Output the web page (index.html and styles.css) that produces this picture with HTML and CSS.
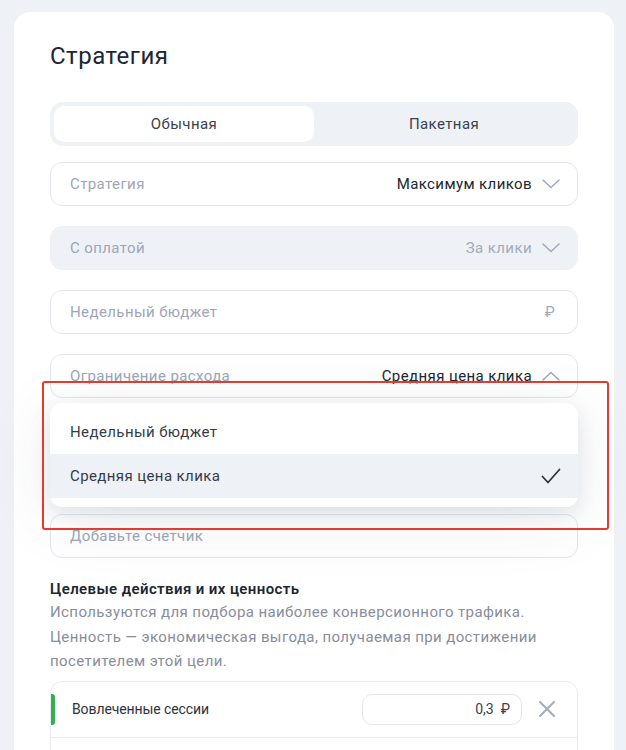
FILE: index.html
```html
<!DOCTYPE html>
<html lang="ru">
<head>
<meta charset="utf-8">
<title>Стратегия</title>
<link rel="stylesheet" href="styles.css">
</head>
<body>
<div class="card">
  <h1 class="title">Стратегия</h1>

  <div class="segmented">
    <div class="seg-tab seg-active">Обычная</div>
    <div class="seg-tab">Пакетная</div>
  </div>

  <div class="fields">
    <div class="field">
      <span class="field-label">Стратегия</span>
      <span class="field-value">Максимум кликов</span>
      <svg class="chev" width="18" height="10" viewBox="0 0 18 10"><path d="M1 1l8 7.5L17 1" fill="none" stroke="#a3abbb" stroke-width="1.6" stroke-linecap="round" stroke-linejoin="round"/></svg>
    </div>

    <div class="field field-filled">
      <span class="field-label">С оплатой</span>
      <span class="field-value muted">За клики</span>
      <svg class="chev" width="18" height="10" viewBox="0 0 18 10"><path d="M1 1l8 7.5L17 1" fill="none" stroke="#a3abbb" stroke-width="1.6" stroke-linecap="round" stroke-linejoin="round"/></svg>
    </div>

    <div class="field">
      <span class="field-label">Недельный бюджет</span>
      <span class="field-value muted rub">₽</span>
    </div>

    <div class="select-wrap">
      <div class="field">
        <span class="field-label">Ограничение расхода</span>
        <span class="field-value">Средняя цена клика</span>
        <svg class="chev" width="18" height="10" viewBox="0 0 18 10"><path d="M1 9l8-7.5L17 9" fill="none" stroke="#a3abbb" stroke-width="1.6" stroke-linecap="round" stroke-linejoin="round"/></svg>
      </div>
      <div class="menu">
        <div class="menu-item">Недельный бюджет</div>
        <div class="menu-item menu-item-selected">
          <span>Средняя цена клика</span>
          <svg class="check" width="20" height="16" viewBox="0 0 20 16"><path d="M1.5 8.5l5.5 6L18.5 1.5" fill="none" stroke="#2b303a" stroke-width="1.7" stroke-linecap="round" stroke-linejoin="round"/></svg>
        </div>
      </div>
    </div>

    <div class="field">
      <span class="field-label">Добавьте счетчик</span>
    </div>
  </div>

  <section class="goals">
    <h2 class="goals-title">Целевые действия и их ценность</h2>
    <p class="goals-desc">Используются для подбора наиболее конверсионного трафика. Ценность — экономическая выгода, получаемая при достижении посетителем этой цели.</p>

    <div class="goal-table">
      <div class="goal-row">
        <span class="goal-mark"></span>
        <span class="goal-name">Вовлеченные сессии</span>
        <div class="goal-input"><span>0,3</span><span class="goal-rub">₽</span></div>
        <svg class="goal-x" width="16" height="16" viewBox="0 0 16 16"><path d="M1 1l14 14M15 1L1 15" fill="none" stroke="#a3abbb" stroke-width="2" stroke-linecap="round"/></svg>
      </div>
      <div class="goal-row goal-row-empty"></div>
    </div>
  </section>
</div>

<div class="annotation"></div>
</body>
</html>
```
FILE: styles.css
```css
* { box-sizing: border-box; }

html, body {
  margin: 0;
  height: 100%;
}

body {
  background: #eef1f6;
  padding: 12px 12px 0 14px;
  font-family: Roboto, "Noto Sans", Arial, sans-serif;
  letter-spacing: 0.4px;
  color: #21262f;
  overflow: hidden;
  position: relative;
}

.card {
  background: #fff;
  border-radius: 16px 16px 0 0;
  padding: 30px 36px 0 36px;
  min-height: 800px;
}

.title {
  margin: 0;
  font-size: 24px;
  line-height: 28px;
  font-weight: 400;
  letter-spacing: 0.5px;
  color: #21262f;
}

.segmented {
  margin-top: 32px;
  height: 44px;
  background: #eef1f6;
  border-radius: 13px;
  padding: 4px;
  display: grid;
  grid-template-columns: 1fr 1fr;
}

.seg-tab {
  display: flex;
  align-items: center;
  justify-content: center;
  font-size: 15px;
  color: #3b414c;
  border-radius: 10px;
}

.seg-active {
  background: #fff;
}

.fields {
  margin-top: 16px;
  display: flex;
  flex-direction: column;
  gap: 20px;
}

.field {
  height: 44px;
  border: 1px solid #e3e6ee;
  border-radius: 12px;
  background: #fff;
  display: flex;
  align-items: center;
  padding: 0 17px 0 19px;
  font-size: 15px;
}

.field-filled {
  background: #eef1f6;
  border-color: #eef1f6;
}

.field-label {
  color: #9ea6b6;
  flex: 1;
}

.field-value {
  color: #21262f;
}

.field-value.muted {
  color: #a3abbb;
}

.rub {
  margin-right: 5px;
}

.chev {
  margin-left: 10px;
  display: block;
}

.select-wrap {
  position: relative;
  margin-bottom: 96px;
}

.menu {
  position: absolute;
  left: 0;
  right: 0;
  top: 49px;
  background: #fff;
  border-radius: 12px;
  padding: 7px 0 9px;
  box-shadow: 0 6px 20px rgba(40, 50, 80, 0.10), 0 10px 70px rgba(40, 50, 90, 0.09);
  z-index: 2;
}

.menu-item {
  height: 44px;
  display: flex;
  align-items: center;
  justify-content: space-between;
  padding: 0 17px 0 20px;
  font-size: 15px;
  color: #353b46;
}

.menu-item-selected {
  background: #eef1f6;
}

.check {
  display: block;
}

.goals {
  margin-top: 21px;
}

.goals-title {
  margin: 0;
  font-size: 15px;
  line-height: 20px;
  font-weight: 600;
  color: #21262f;
}

.goals-desc {
  margin: 1px 0 0;
  font-size: 15px;
  line-height: 24.5px;
  color: #878d9b;
}

.goal-table {
  margin-top: 7px;
  border: 1px solid #e8ebf1;
  border-radius: 12px;
}

.goal-row {
  height: 56px;
  display: flex;
  align-items: center;
  border-bottom: 1px solid #e8ebf1;
  padding-right: 22px;
}

.goal-row-empty {
  border-bottom: none;
}

.goal-mark {
  width: 4px;
  height: 31px;
  background: #2fb24c;
  border-radius: 0 3px 3px 0;
}

.goal-name {
  flex: 1;
  margin-left: 17px;
  font-size: 14px;
  letter-spacing: -0.1px;
  color: #2c323d;
}

.goal-input {
  width: 160px;
  height: 31px;
  border: 1px solid #e3e6ee;
  border-radius: 10px;
  display: flex;
  align-items: center;
  justify-content: flex-end;
  padding-right: 11px;
  font-size: 14px;
  letter-spacing: 0;
  color: #3b414c;
  gap: 7px;
}

.goal-x {
  margin-left: 17px;
  display: block;
}

.annotation {
  position: absolute;
  left: 42px;
  top: 381px;
  width: 567px;
  height: 149px;
  border: 2px solid #e53a30;
  border-radius: 3px;
  z-index: 5;
}
```
